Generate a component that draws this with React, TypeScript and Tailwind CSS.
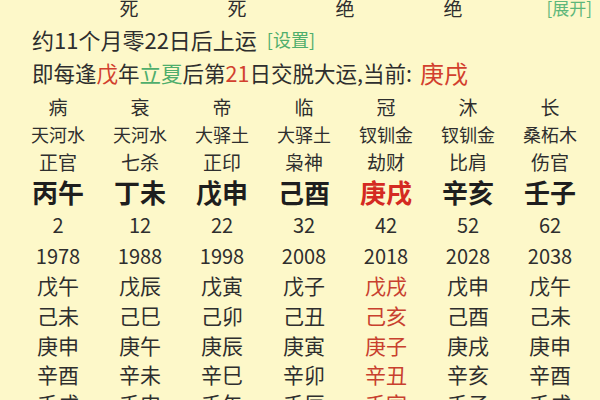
import React from "react";

const cols = ["丙午", "丁未", "戊申", "己酉", "庚戌", "辛亥", "壬子"];
const zhang = ["病", "衰", "帝", "临", "冠", "沐", "长"];
const nayin = ["天河水", "天河水", "大驿土", "大驿土", "钗钏金", "钗钏金", "桑柘木"];
const shishen = ["正官", "七杀", "正印", "枭神", "劫财", "比肩", "伤官"];
const ages = ["2", "12", "22", "32", "42", "52", "62"];
const years = ["1978", "1988", "1998", "2008", "2018", "2028", "2038"];
const liunian = [
  ["戊午", "戊辰", "戊寅", "戊子", "戊戌", "戊申", "戊午"],
  ["己未", "己巳", "己卯", "己丑", "己亥", "己酉", "己未"],
  ["庚申", "庚午", "庚辰", "庚寅", "庚子", "庚戌", "庚申"],
  ["辛酉", "辛未", "辛巳", "辛卯", "辛丑", "辛亥", "辛酉"],
  ["壬戌", "壬申", "壬午", "壬辰", "壬寅", "壬子", "壬戌"],
];

function Row({
  items,
  className,
  cellClass,
  activeClass,
}: {
  items: string[];
  className: string;
  cellClass: string;
  activeClass?: string;
}) {
  return (
    <div className={"grid grid-cols-[repeat(7,82px)] " + className}>
      {items.map((t, i) => (
        <div
          key={i}
          className={"text-center whitespace-nowrap " + (i === 4 && activeClass ? activeClass : cellClass)}
        >
          {t}
        </div>
      ))}
    </div>
  );
}

export default function App() {
  return (
    <div
      className="w-[600px] h-[400px] overflow-hidden bg-[#fdf8c9] text-[#2e2e2e]"
      style={{ fontFamily: '"Noto Sans CJK SC", "Noto Sans", sans-serif' }}
    >
      {/* top row */}
      <div className="flex items-center h-[24px] -mt-[4px] pl-[75px] text-[19px] leading-[24px]">
        <div className="w-[108px] text-center">死</div>
        <div className="w-[108px] text-center">死</div>
        <div className="w-[108px] text-center">绝</div>
        <div className="w-[108px] text-center">绝</div>
        <div className="ml-auto pr-[8px] text-[17px] text-[#5db77a]">[展开]</div>
      </div>

      {/* line 1 */}
      <div className="flex items-center h-[38px] pl-[32px]">
        <span className="text-[22px] leading-[38px]">约11个月零22日后上运</span>
        <span className="ml-[10px] text-[18px] text-[#4fae6c]">[设置]</span>
      </div>

      {/* line 2 */}
      <div className="flex items-center h-[30px] pl-[32px] text-[21.5px] leading-[30px] whitespace-nowrap">
        <span>即每逢</span>
        <span className="text-[#d2402e]">戊</span>
        <span>年</span>
        <span className="text-[#4fae6c]">立夏</span>
        <span>后第</span>
        <span className="text-[#d2402e]">21</span>
        <span>日交脱大运,当前:</span>
        <span className="ml-[8px] text-[24px] text-[#d2402e]">庚戌</span>
      </div>

      {/* table */}
      <div className="ml-[17px] mt-[6px]">
        <Row items={zhang} className="h-[26px] items-center" cellClass="text-[19px] leading-[26px]" />
        <Row items={nayin} className="h-[28px] items-center" cellClass="text-[18px] leading-[28px]" />
        <Row items={shishen} className="h-[28px] items-center" cellClass="text-[19px] leading-[28px]" />
        <Row
          items={cols}
          className="h-[32px] items-center"
          cellClass="text-[26px] leading-[32px] font-bold text-[#1e1e1e]"
          activeClass="text-[26px] leading-[32px] font-bold text-[#d42a22]"
        />
        <Row items={ages} className="h-[34px] items-center" cellClass="text-[20px] leading-[34px]" />
        <Row items={years} className="h-[28px] items-center" cellClass="text-[20px] leading-[28px]" />
        {liunian.map((r, i) => (
          <Row
            key={i}
            items={r}
            className={i < 3 ? "h-[30px] items-center" : "h-[29px] items-center"}
            cellClass="text-[21px] leading-[29px]"
            activeClass="text-[21px] leading-[29px] text-[#c8402e]"
          />
        ))}
      </div>
    </div>
  );
}
